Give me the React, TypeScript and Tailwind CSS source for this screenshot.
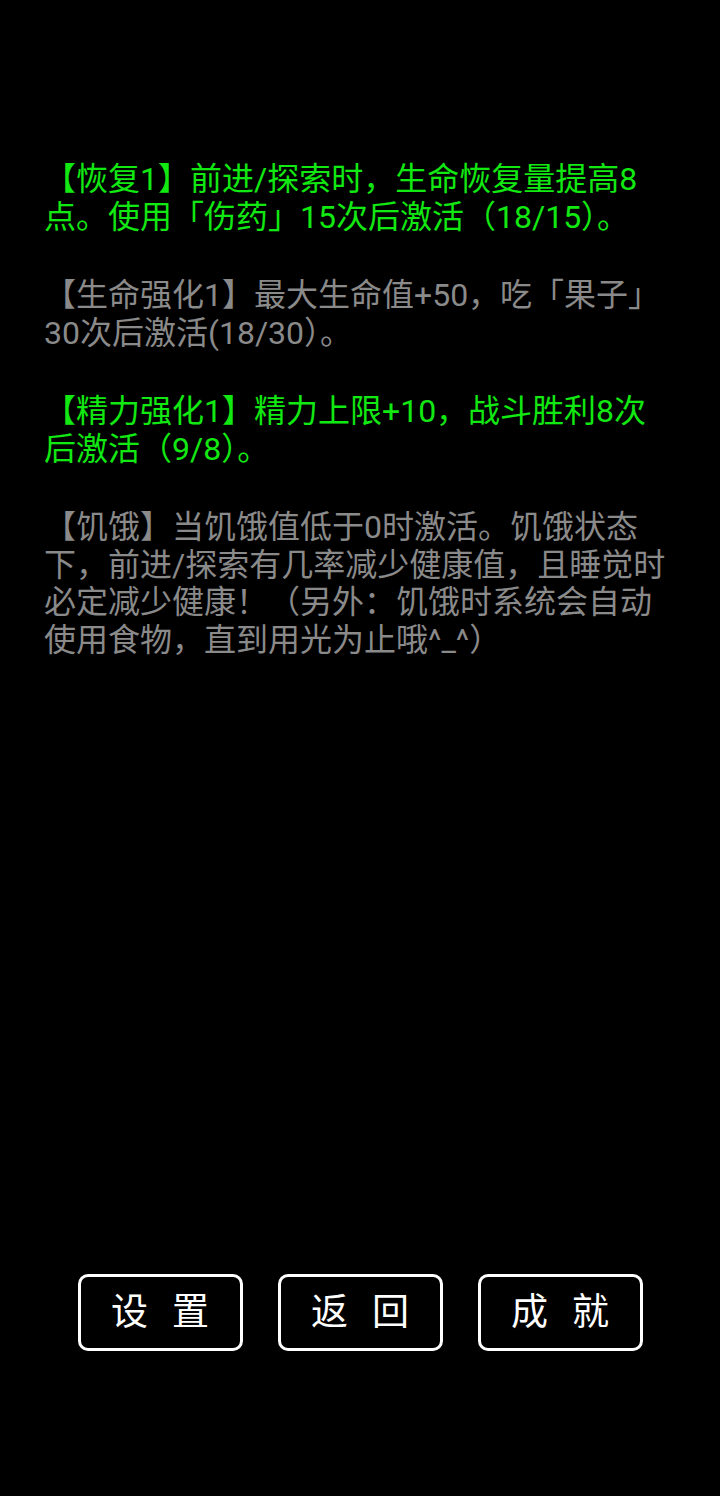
import React from 'react';

const FONT = { fontFamily: 'Roboto, "Noto Sans CJK SC", sans-serif' };

const entries = [
  { text: '【恢复1】前进/探索时，生命恢复量提高8点。使用「伤药」15次后激活（18/15）。', on: true },
  { text: '【生命强化1】最大生命值+50，吃「果子」30次后激活(18/30）。', on: false },
  { text: '【精力强化1】精力上限+10，战斗胜利8次后激活（9/8）。', on: true },
  {
    text: '【饥饿】当饥饿值低于0时激活。饥饿状态下，前进/探索有几率减少健康值，且睡觉时必定减少健康！（另外：饥饿时系统会自动使用食物，直到用光为止哦^_^）',
    on: false,
  },
];

const buttons = [
  ['设', '置'],
  ['返', '回'],
  ['成', '就'],
];

export default function App() {
  return (
    <div className="w-[720px] h-[1496px] bg-black flex flex-col" style={FONT}>
      {/* Buff list */}
      <div className="pt-[161px] pl-[44px] pr-[48px] flex flex-col gap-[41px]">
        {entries.map((e, i) => (
          <p
            key={i}
            className={`text-[32px] leading-[37.5px] ${e.on ? 'text-[#12e812]' : 'text-[#8a8a8a]'}`}
          >
            {e.text}
          </p>
        ))}
      </div>

      {/* Bottom buttons */}
      <div className="mt-auto mb-[145px] flex justify-center gap-[35px]">
        {buttons.map(([a, b]) => (
          <button
            key={a}
            className="w-[165px] h-[77px] border-[3px] border-white rounded-[10px] text-white text-[37px] leading-none flex items-center justify-center gap-[24px]"
          >
            <span>{a}</span>
            <span>{b}</span>
          </button>
        ))}
      </div>
    </div>
  );
}
